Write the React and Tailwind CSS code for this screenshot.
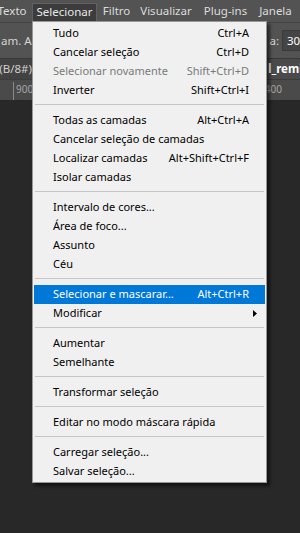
import React from "react";

const groups = [
  [
    { label: "Tudo", sc: "Ctrl+A" },
    { label: "Cancelar seleção", sc: "Ctrl+D" },
    { label: "Selecionar novamente", sc: "Shift+Ctrl+D", disabled: true },
    { label: "Inverter", sc: "Shift+Ctrl+I" },
  ],
  [
    { label: "Todas as camadas", sc: "Alt+Ctrl+A" },
    { label: "Cancelar seleção de camadas" },
    { label: "Localizar camadas", sc: "Alt+Shift+Ctrl+F" },
    { label: "Isolar camadas" },
  ],
  [
    { label: "Intervalo de cores..." },
    { label: "Área de foco..." },
    { label: "Assunto" },
    { label: "Céu" },
  ],
  [
    { label: "Selecionar e mascarar...", sc: "Alt+Ctrl+R", active: true },
    { label: "Modificar", sub: true },
  ],
  [{ label: "Aumentar" }, { label: "Semelhante" }],
  [{ label: "Transformar seleção" }],
  [{ label: "Editar no modo máscara rápida" }],
  [{ label: "Carregar seleção..." }, { label: "Salvar seleção..." }],
];

function Item({ it }) {
  const base = "relative flex items-center h-[19px] mx-[1px] pl-[19px] pr-[16px] whitespace-nowrap";
  const color = it.active
    ? "bg-[#0078d7] text-white"
    : it.disabled
    ? "text-[#7a7a7a]"
    : "text-black";
  return (
    <div className={`${base} ${color}`}>
      <span className="flex-1">{it.label}</span>
      {it.sc && <span>{it.sc}</span>}
      {it.sub && (
        <svg width="4" height="7" viewBox="0 0 4 7" className="absolute right-[8px] top-[6px]">
          <path d="M0 0 L4 3.5 L0 7 Z" fill="#000" />
        </svg>
      )}
    </div>
  );
}

export default function App() {
  return (
    <div
      className="relative w-[300px] h-[533px] overflow-hidden bg-[#282828] flex flex-col text-[11px]"
      style={{ fontFamily: '"Noto Sans", "Open Sans", sans-serif' }}
    >
      {/* Menu bar */}
      <div className="h-[23px] shrink-0 bg-[#535353] flex items-stretch text-[11.5px] text-[#dcdcdc] border-b border-[#434343]">
        <div className="w-[40px] ml-[-8px] flex items-center justify-center">Texto</div>
        <div className="w-[65px] flex items-center justify-center mt-[3px] pb-[2px] bg-[#3c3c3c] border border-b-0 border-[#616161] text-[#e8e8e8]">
          Selecionar
        </div>
        <div className="w-[39px] flex items-center justify-center">Filtro</div>
        <div className="w-[60px] flex items-center justify-center">Visualizar</div>
        <div className="w-[59px] flex items-center justify-center">Plug-ins</div>
        <div className="w-[41px] flex items-center justify-center">Janela</div>
      </div>

      {/* Options bar */}
      <div className="h-[35px] shrink-0 bg-[#535353] flex items-center text-[11.5px] text-[#d4d4d4]">
        <span className="pl-[1px] whitespace-nowrap">am. Am</span>
        <span className="ml-auto whitespace-nowrap">a:</span>
        <div className="ml-[3px] mr-[-6px] w-[24px] h-[21px] bg-[#454545] border border-[#3a3a3a] flex items-center pl-[4px] text-white">
          30
        </div>
      </div>

      {/* Document tabs */}
      <div className="h-[21px] shrink-0 bg-[#424242] flex items-center border-t border-[#383838] text-[11.5px]">
        <div className="w-[32px] flex justify-end overflow-hidden whitespace-nowrap text-[#cfcfcf]">
          <span>(B/8#)</span>
        </div>
        <div className="ml-auto w-[34px] h-full bg-[#4a4a4a] flex items-center whitespace-nowrap overflow-hidden font-bold text-white pl-[2px]">
          l_remix
        </div>
      </div>

      {/* Ruler */}
      <div className="h-[21px] shrink-0 bg-[#4a4a4a] flex items-end relative text-[10px] text-[#a4a4a4] border-t border-[#3c3c3c]">
        <div className="ml-[13px] h-[18px] border-l border-[#8a8a8a] pl-[2px] leading-[14px]">900</div>
        <div className="ml-auto mr-[18px] h-[18px] border-l border-[#8a8a8a] pl-[2px] leading-[14px]">400</div>
      </div>

      {/* Canvas */}
      <div className="flex-1 bg-[#282828]" />

      {/* Dropdown menu */}
      <div className="absolute left-[32px] top-[21px] w-[235px] bg-[#f0f0f0] border border-[#979797] py-[1px] shadow-[3px_3px_3px_rgba(0,0,0,0.55)]">
        <div className="h-[1px]" />
        {groups.map((g, gi) => (
          <React.Fragment key={gi}>
            {gi > 0 && (
              <div className="h-[11px] pt-[4px] px-[1px]">
                <div className="mx-[1px] h-[1px] bg-[#c6c6c6]" />
              </div>
            )}
            {g.map((it, ii) => (
              <Item key={ii} it={it} />
            ))}
          </React.Fragment>
        ))}
      </div>
    </div>
  );
}
